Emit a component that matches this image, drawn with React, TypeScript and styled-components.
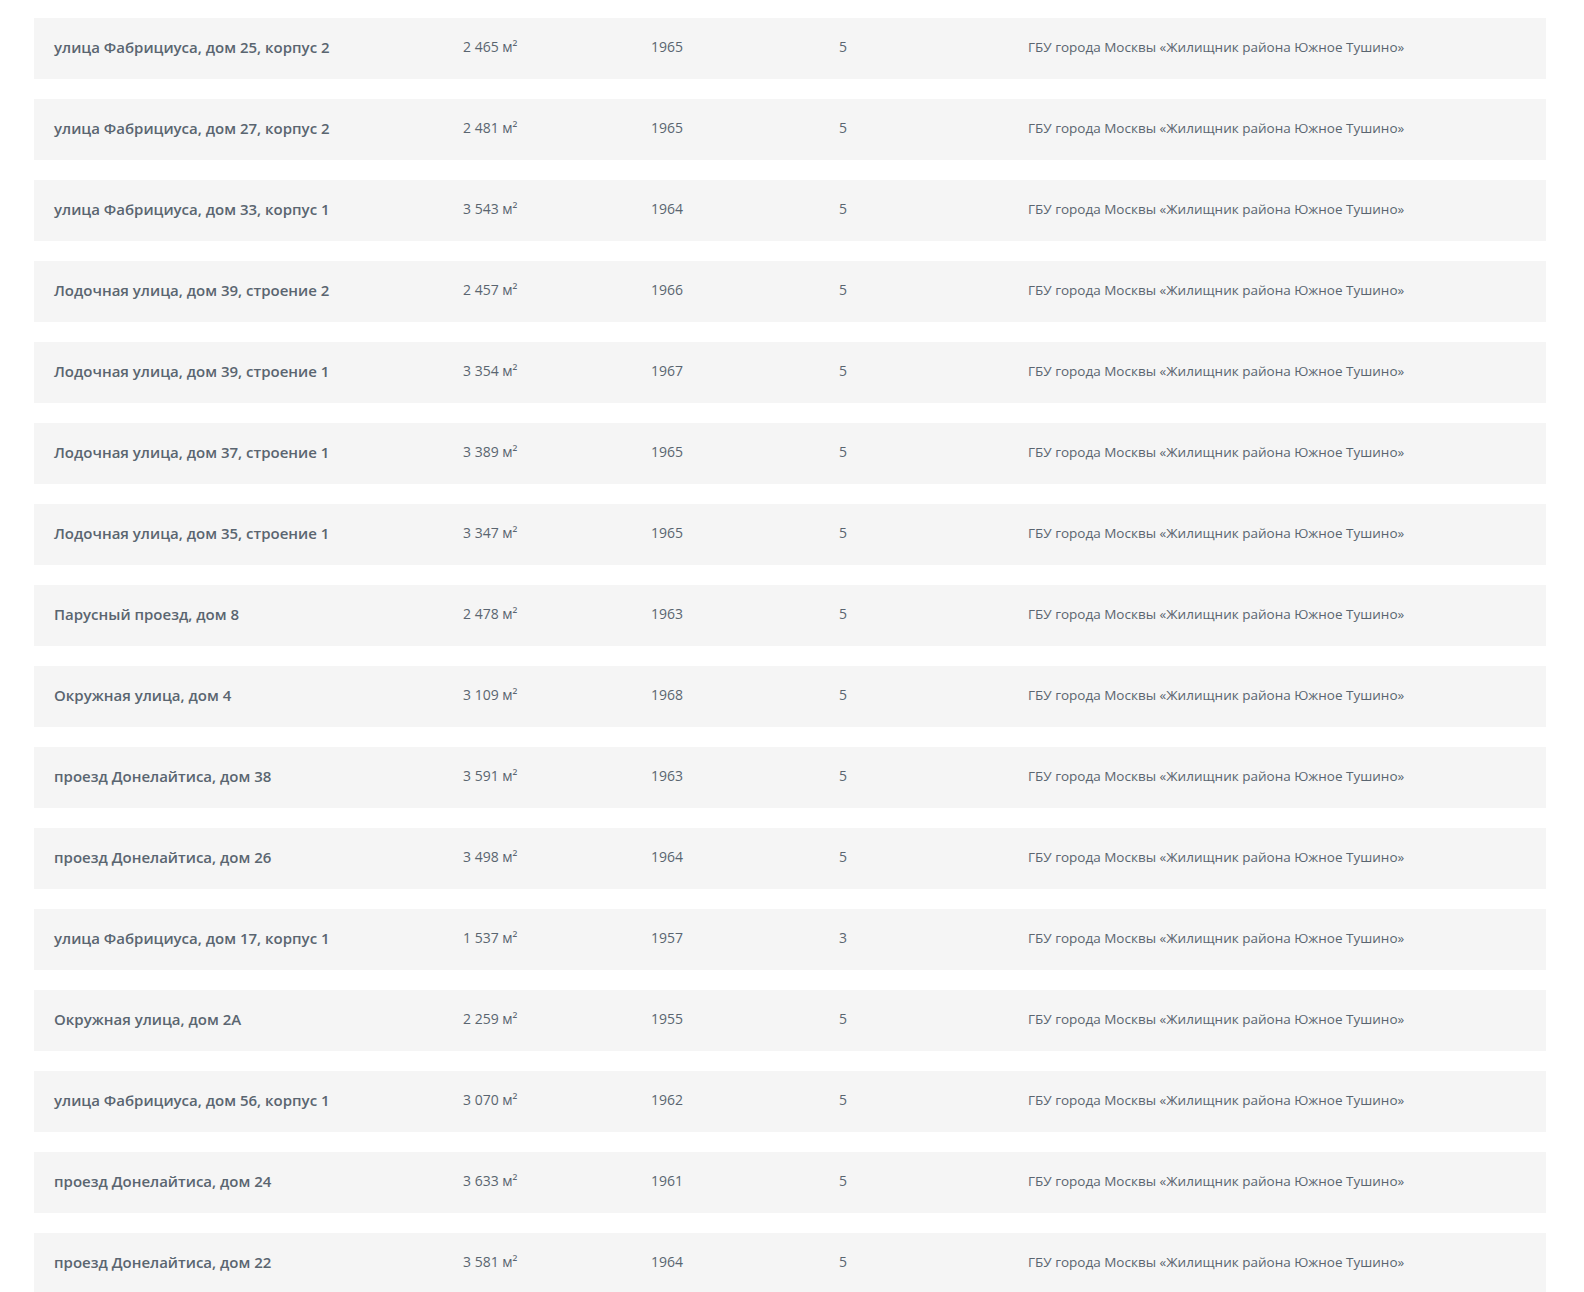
import React from 'react';
import styled, { createGlobalStyle } from 'styled-components';

interface House {
  id: number;
  address: string;
  area: string;
  year: number;
  floors: number;
  company: string;
}

const COMPANY = 'ГБУ города Москвы «Жилищник района Южное Тушино»';

const houses: House[] = [
  { id: 1, address: 'улица Фабрициуса, дом 25, корпус 2', area: '2 465', year: 1965, floors: 5, company: COMPANY },
  { id: 2, address: 'улица Фабрициуса, дом 27, корпус 2', area: '2 481', year: 1965, floors: 5, company: COMPANY },
  { id: 3, address: 'улица Фабрициуса, дом 33, корпус 1', area: '3 543', year: 1964, floors: 5, company: COMPANY },
  { id: 4, address: 'Лодочная улица, дом 39, строение 2', area: '2 457', year: 1966, floors: 5, company: COMPANY },
  { id: 5, address: 'Лодочная улица, дом 39, строение 1', area: '3 354', year: 1967, floors: 5, company: COMPANY },
  { id: 6, address: 'Лодочная улица, дом 37, строение 1', area: '3 389', year: 1965, floors: 5, company: COMPANY },
  { id: 7, address: 'Лодочная улица, дом 35, строение 1', area: '3 347', year: 1965, floors: 5, company: COMPANY },
  { id: 8, address: 'Парусный проезд, дом 8', area: '2 478', year: 1963, floors: 5, company: COMPANY },
  { id: 9, address: 'Окружная улица, дом 4', area: '3 109', year: 1968, floors: 5, company: COMPANY },
  { id: 10, address: 'проезд Донелайтиса, дом 38', area: '3 591', year: 1963, floors: 5, company: COMPANY },
  { id: 11, address: 'проезд Донелайтиса, дом 26', area: '3 498', year: 1964, floors: 5, company: COMPANY },
  { id: 12, address: 'улица Фабрициуса, дом 17, корпус 1', area: '1 537', year: 1957, floors: 3, company: COMPANY },
  { id: 13, address: 'Окружная улица, дом 2А', area: '2 259', year: 1955, floors: 5, company: COMPANY },
  { id: 14, address: 'улица Фабрициуса, дом 56, корпус 1', area: '3 070', year: 1962, floors: 5, company: COMPANY },
  { id: 15, address: 'проезд Донелайтиса, дом 24', area: '3 633', year: 1961, floors: 5, company: COMPANY },
  { id: 16, address: 'проезд Донелайтиса, дом 22', area: '3 581', year: 1964, floors: 5, company: COMPANY },
];

const GlobalStyle = createGlobalStyle`
  html, body {
    margin: 0;
    padding: 0;
    background: #ffffff;
    overflow: hidden;
  }
  body {
    font-family: "Open Sans", "Noto Sans", sans-serif;
  }
`;

const App: React.FC = () => {
  return (
    <>
      <GlobalStyle />
      <List>
        {houses.map((h: House) => (
          <Row key={h.id}>
            <Address>{h.address}</Address>
            <Cell>{h.area} м²</Cell>
            <Cell>{h.year}</Cell>
            <Cell>{h.floors}</Cell>
            <Company>{h.company}</Company>
          </Row>
        ))}
      </List>
    </>
  );
};

export default App;

const List = styled.section`
  display: flex;
  flex-direction: column;
  gap: 20px;
  width: 1512px;
  margin-left: 34px;
  padding-top: 18px;
`;

const Row = styled.div`
  display: grid;
  grid-template-columns: 409px 188px 188px 189px 1fr;
  align-items: center;
  height: 61px;
  background: #f5f5f5;
  color: #5a6570;
`;

const Cell = styled.div`
  padding-left: 20px;
  padding-bottom: 4px;
  font-size: 14px;
  font-weight: 400;
  white-space: nowrap;
`;

const Address = styled(Cell)`
  font-size: 15px;
  font-weight: 600;
`;

const Company = styled(Cell)`
  font-size: 13.5px;
`;
